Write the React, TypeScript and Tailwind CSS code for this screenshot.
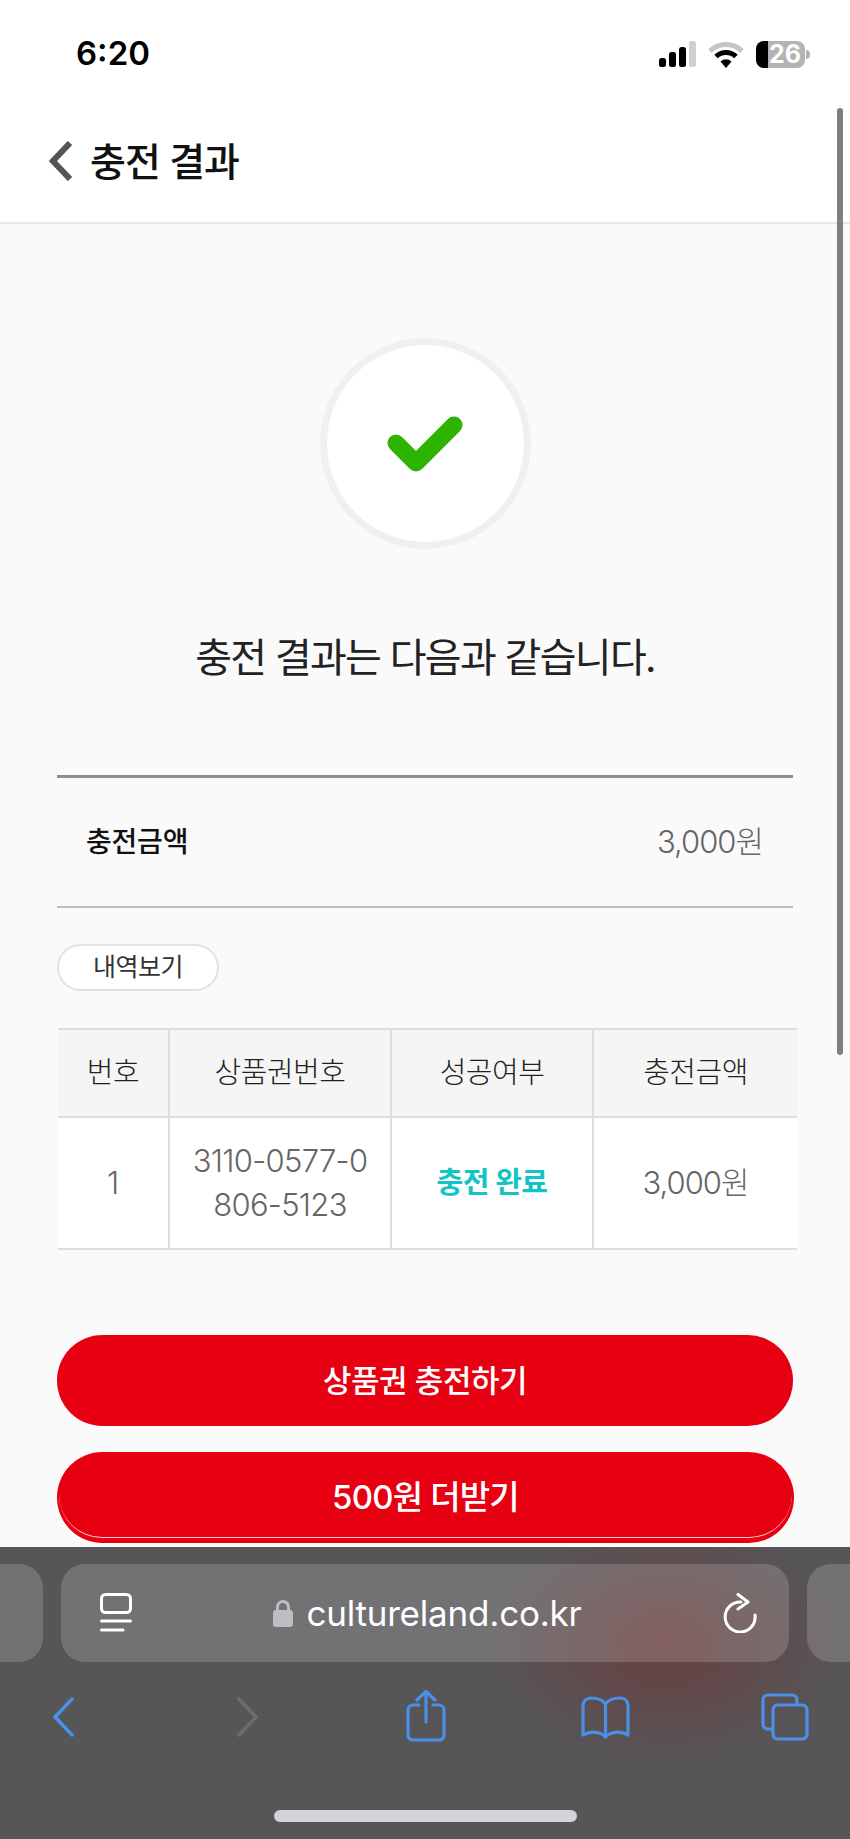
const sans = "font-['Inter','Noto_Sans_CJK_KR',sans-serif]"

function StatusIcons() {
  return (
    <div className="flex items-center">
      <svg width="37" height="26" viewBox="0 0 37 26" className="mr-[12px]">
        <rect x="0" y="17" width="7" height="9" rx="2.5" fill="#000" />
        <rect x="10" y="11" width="7" height="15" rx="2.5" fill="#000" />
        <rect x="20" y="6" width="7" height="20" rx="2.5" fill="#000" />
        <rect x="30" y="0" width="7" height="26" rx="2.5" fill="#cfcfcf" />
      </svg>
      <svg width="36" height="27" viewBox="0 0 36 27" className="mr-[12px]">
        <path d="M2 10 A23 23 0 0 1 34 10" fill="none" stroke="#c4c4c4" strokeWidth="5" />
        <path d="M8 15.5 A14.5 14.5 0 0 1 28 15.5" fill="none" stroke="#000" strokeWidth="5" />
        <path d="M12.5 20.5 L18 27 L23.5 20.5 A8 8 0 0 0 12.5 20.5 Z" fill="#000" />
      </svg>
      <div className="w-[49px] h-[27px] rounded-[8px] bg-[#b3b3b3] flex">
        <div className="w-[12px] bg-black rounded-l-[8px]" />
        <span className="text-white font-bold text-[25px] leading-[27px] ml-[1px] font-['Inter',sans-serif]">26</span>
      </div>
      <div className="w-[4px] h-[9px] ml-[1px] rounded-r-full bg-[#b3b3b3]" />
    </div>
  )
}

function Toolbar() {
  return (
    <div className="h-[292px] shrink-0 pt-[17px] bg-[#565658] bg-[radial-gradient(ellipse_180px_125px_at_665px_95px,rgba(125,40,40,0.5),transparent)]">
      <div className="flex h-[98px] gap-[18px]">
        <div className="w-[43px] rounded-r-[24px] bg-white/[0.17]" />
        <div className="w-[728px] rounded-[24px] bg-white/[0.17] flex items-center pl-[39px] pr-[32px]">
          <svg width="32" height="40" viewBox="0 0 32 40" fill="none" stroke="#fff" strokeWidth="3" strokeLinecap="round">
            <rect x="1.5" y="1.5" width="29" height="18" rx="4" />
            <path d="M1.5 28 H30.5" />
            <path d="M1.5 37 H23" />
          </svg>
          <div className="flex-1 flex items-center justify-center">
            <svg width="20" height="28" viewBox="0 0 20 28" className="mr-[13px]">
              <path d="M4.5 13 V8 a5.5 5.5 0 0 1 11 0 V13" fill="none" stroke="#bdbdc2" strokeWidth="3" />
              <rect x="0" y="11" width="20" height="17" rx="3" fill="#bdbdc2" />
            </svg>
            <span className="text-white text-[35px] leading-none tracking-[-0.2px] font-['Inter',sans-serif]">cultureland.co.kr</span>
          </div>
          <svg width="34" height="40" viewBox="0 0 34 40" fill="none" stroke="#fff" strokeWidth="3" strokeLinecap="round" strokeLinejoin="round">
            <path d="M18 9 A15 15 0 1 0 32 22" />
            <path d="M15 1.5 L25 9 L15 16" />
          </svg>
        </div>
        <div className="w-[43px] rounded-l-[24px] bg-white/[0.17]" />
      </div>
      <div className="flex items-start mt-[28px]">
        <svg width="22" height="40" viewBox="0 0 22 40" fill="none" stroke="#4a90e8" strokeWidth="3.5" strokeLinecap="round" strokeLinejoin="round" className="ml-[52px] mt-[7px]">
          <path d="M20 2 L3 20 L20 38" />
        </svg>
        <svg width="22" height="40" viewBox="0 0 22 40" fill="none" stroke="#6d6d70" strokeWidth="3.5" strokeLinecap="round" strokeLinejoin="round" className="ml-[163px] mt-[7px]">
          <path d="M2 2 L19 20 L2 38" />
        </svg>
        <svg width="40" height="52" viewBox="0 0 40 52" fill="none" stroke="#4a90e8" strokeWidth="3.2" strokeLinecap="round" strokeLinejoin="round" className="ml-[147px]">
          <path d="M13 15 H7 a5 5 0 0 0 -5 5 V45 a5 5 0 0 0 5 5 H33 a5 5 0 0 0 5 -5 V20 a5 5 0 0 0 -5 -5 H27" />
          <path d="M20 32 V2" />
          <path d="M11 10 L20 1.5 L29 10" />
        </svg>
        <svg width="51" height="43" viewBox="0 0 51 43" fill="none" stroke="#4a90e8" strokeWidth="3.2" strokeLinecap="round" strokeLinejoin="round" className="ml-[134px] mt-[6px]">
          <path d="M25.5 8 C22 3 16 2 11 2 C6 2 3 5 3 10 V39 C10 35 20 35 25.5 41 C31 35 41 35 48 39 V10 C48 5 45 2 40 2 C35 2 29 3 25.5 8 Z" />
          <path d="M25.5 8 V41" />
        </svg>
        <svg width="48" height="48" viewBox="0 0 48 48" fill="none" stroke="#4a90e8" strokeWidth="3.2" strokeLinejoin="round" className="ml-[130px] mt-[3px]">
          <path d="M36 11 V7 a5 5 0 0 0 -5 -5 H7 a5 5 0 0 0 -5 5 V31 a5 5 0 0 0 5 5 H12" />
          <rect x="12" y="12" width="34" height="34" rx="5" />
        </svg>
      </div>
      <div className="w-[303px] h-[12px] rounded-full bg-[#d4d3d8] ml-[274px] mt-[68px]" />
    </div>
  )
}

export default function App() {
  return (
    <div className={`relative w-[850px] h-[1839px] overflow-hidden flex flex-col bg-[#fafafb] ${sans}`}>
      <div className="h-[224px] shrink-0 bg-white border-b-2 border-[#e8e8e8]">
        <div className="flex items-center justify-between h-[108px] pl-[76px] pr-[40px]">
          <span className="text-[33px] font-semibold text-black font-['Inter',sans-serif]">6:20</span>
          <StatusIcons />
        </div>
        <div className="flex items-center pl-[49px] h-[56px] mt-[25px]">
          <svg width="24" height="40" viewBox="0 0 24 40" fill="none" stroke="#555" strokeWidth="6" className="mr-[17px]">
            <path d="M21 2 L4 20 L21 38" />
          </svg>
          <h1 className="text-[39px] leading-none font-medium text-[#111] tracking-[-1px]">충전 결과</h1>
        </div>
      </div>

      <div className="flex-1 min-h-0 overflow-hidden px-[57px]">
        <div className="mx-auto mt-[114px] w-[211px] h-[211px] rounded-full bg-white border-[7px] border-[#f0f0f2] flex items-center justify-center">
          <svg width="76" height="60" viewBox="0 0 76 60" fill="none" stroke="#2db400" strokeWidth="17" strokeLinecap="round" strokeLinejoin="round">
            <path d="M9 29 L29 49 L67 11" />
          </svg>
        </div>
        <p className="mt-[84px] text-center text-[40px] leading-[50px] text-[#222] tracking-[-1.7px]">충전 결과는 다음과 같습니다.</p>

        <div className="mt-[92px] w-[736px] border-t-[3px] border-b-[2px] border-t-[#8e8e8e] border-b-[#bcbcbc] h-[133px] flex items-center justify-between pl-[29px] pr-[30px]">
          <span className="text-[28px] font-medium text-[#111] tracking-[-0.2px]">충전금액</span>
          <span className="text-[31px] font-light text-[#666] tracking-[-1px]">3,000원</span>
        </div>

        <button className="mt-[36px] block w-[162px] h-[47px] rounded-full bg-white border-2 border-[#e2e2e2] text-[25px] leading-none text-[#333] tracking-[-0.5px]">내역보기</button>

        <table className="mt-[37px] ml-[1px] w-[739px] table-fixed border-separate border-spacing-0 text-center">
          <colgroup>
            <col className="w-[112px]" />
            <col className="w-[222px]" />
            <col className="w-[202px]" />
            <col className="w-[203px]" />
          </colgroup>
          <thead>
            <tr className="h-[90px] bg-[#f5f5f6] text-[29px] text-[#222] tracking-[-0.5px]">
              <th className="font-light border-y-2 border-r-2 border-[#dddddd]">번호</th>
              <th className="font-light border-y-2 border-r-2 border-[#dddddd]">상품권번호</th>
              <th className="font-light border-y-2 border-r-2 border-[#dddddd]">성공여부</th>
              <th className="font-light border-y-2 border-[#dddddd]">충전금액</th>
            </tr>
          </thead>
          <tbody>
            <tr className="h-[132px] bg-white text-[31px] font-light text-[#666]">
              <td className="border-b-2 border-r-2 border-[#dddddd]">1</td>
              <td className="border-b-2 border-r-2 border-[#dddddd] leading-[44px] tracking-[-0.7px]">3110-0577-0<br />806-5123</td>
              <td className="border-b-2 border-r-2 border-[#dddddd] text-[29px] font-bold text-[#14c3c3] tracking-[-0.5px]">충전 완료</td>
              <td className="border-b-2 border-[#dddddd] tracking-[-1px]">3,000원</td>
            </tr>
          </tbody>
        </table>

        <button className="mt-[85px] block w-[736px] h-[91px] rounded-full bg-[#e60012] text-white text-[31px] leading-none font-medium tracking-[-0.5px]">상품권 충전하기</button>
        <button className="relative mt-[26px] block w-[737px] h-[91px] rounded-full bg-[#e60012] text-white text-[33px] leading-none font-medium tracking-[-0.8px]">
          500원 더받기
          <span className="absolute inset-x-[2px] top-0 bottom-[5px] rounded-full border-b border-white/80" />
        </button>
      </div>

      <Toolbar />
      <div className="absolute left-[837px] top-[108px] w-[6px] h-[947px] rounded-full bg-[#7f7f7f]" />
    </div>
  )
}
